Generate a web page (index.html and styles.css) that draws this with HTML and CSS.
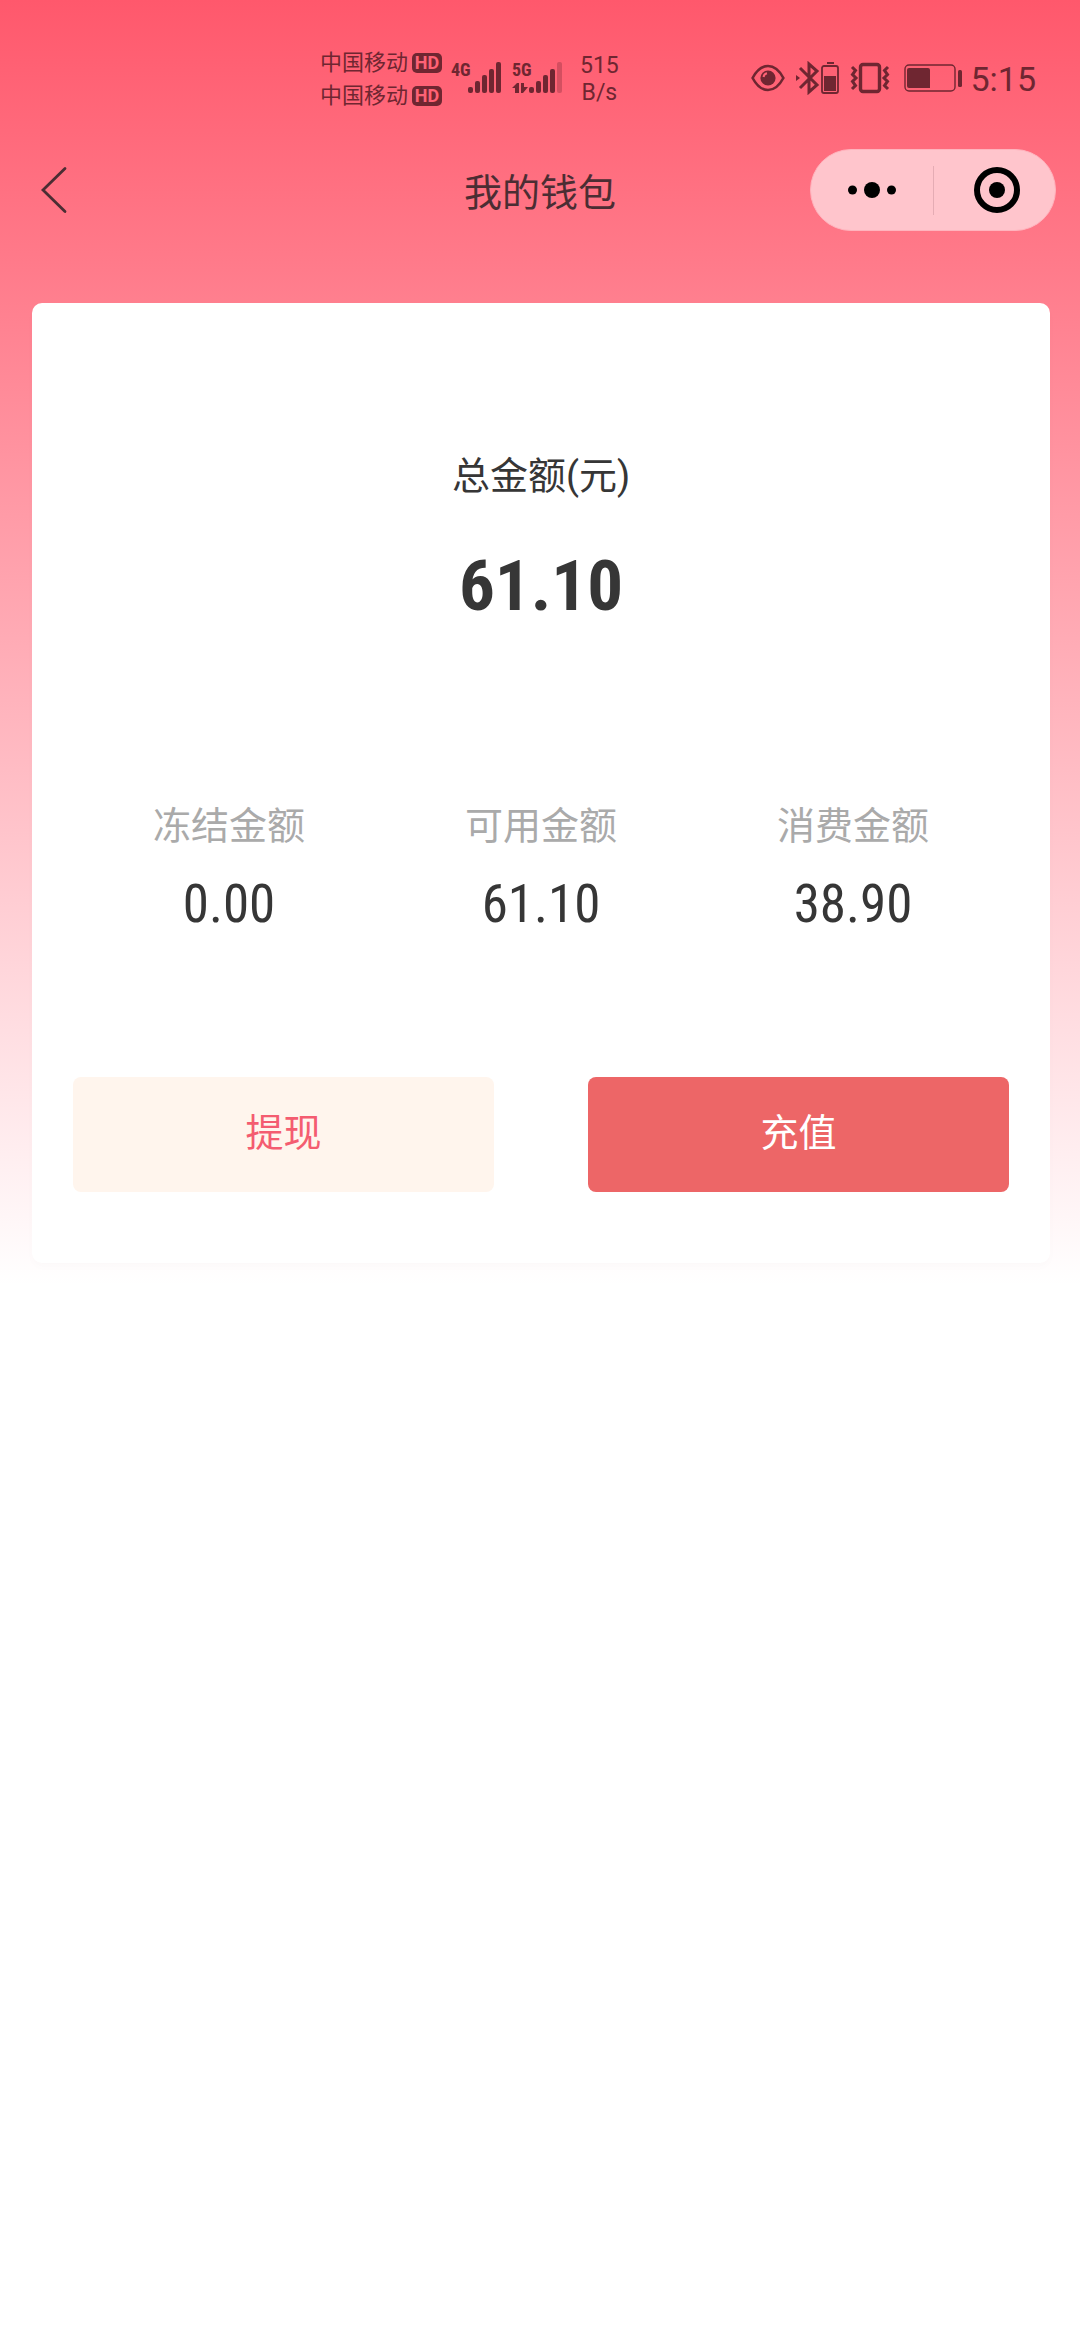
FILE: index.html
```html
<!DOCTYPE html>
<html lang="zh-CN">
<head>
<meta charset="utf-8">
<meta name="viewport" content="width=device-width, initial-scale=1">
<title>我的钱包</title>
<link rel="stylesheet" href="styles.css">
</head>
<body>
<div class="page">
  <div class="status-bar">
    <div class="status-group">
      <div class="carriers">
        <div class="carrier">中国移动<span class="hd">HD</span></div>
        <div class="carrier">中国移动<span class="hd">HD</span></div>
      </div>
      <svg class="signal" width="52" height="44" viewBox="0 -4 52 44" fill="currentColor" aria-label="4G">
        <text class="net" x="0" y="16">4G</text>
        <rect x="17" y="27" width="5" height="6" rx="2"/>
        <rect x="24" y="21" width="5" height="12" rx="2"/>
        <rect x="31" y="15" width="5" height="18" rx="2"/>
        <rect x="38" y="9" width="5" height="24" rx="2"/>
        <rect x="45" y="2" width="5" height="31" rx="2"/>
      </svg>
      <svg class="signal" width="52" height="44" viewBox="0 -4 52 44" fill="currentColor" aria-label="5G">
        <text class="net" x="0" y="16">5G</text>
        <path d="M0 28 5 23H7V33H3V28ZM9 23H12V27H16L11 33H9Z"/>
        <rect x="17" y="27" width="5" height="6" rx="2"/>
        <rect x="24" y="21" width="5" height="12" rx="2"/>
        <rect x="31" y="15" width="5" height="18" rx="2"/>
        <rect x="38" y="9" width="5" height="24" rx="2"/>
        <rect x="45" y="2" width="5" height="31" rx="2" opacity=".3"/>
      </svg>
      <div class="speed">515<br>B/s</div>
    </div>
    <div class="status-group status-icons">
      <svg width="34" height="34" viewBox="0 0 34 34" fill="none" stroke="currentColor" stroke-width="2.6">
        <path d="M1.6 17Q8 5 17 5T32.400 17Q26 29 17 29T1.600 17Z"/>
        <circle cx="17" cy="17" r="7.600" fill="currentColor" stroke="none"/>
        <path d="M12.500 16Q13 13 16 12.300" stroke="#ff6275" stroke-width="2"/>
      </svg>
      <svg class="bluetooth" width="44" height="34" viewBox="0 0 44 34" fill="none" stroke="currentColor">
        <path d="M4 7 21 24 13 31V3L21 10 4 27" stroke-width="3"/>
        <path d="M0 14 4 17 0 20Z" fill="currentColor" stroke="none"/>
        <rect x="26" y="5" width="16" height="27" rx="2" stroke-width="1.800"/>
        <path d="M28 15H40V30H28ZM31 1H38V3H31Z" fill="currentColor" stroke="none"/>
      </svg>
      <svg class="vibrate" width="40" height="34" viewBox="0 0 40 34" fill="none" stroke="currentColor">
        <rect x="10.500" y="3.500" width="19" height="27" rx="2.500" stroke-width="3.400"/>
        <path d="M2 6 5.500 9.500 2.500 13.500 6 17 2.500 20.500 5.500 24.500 2 28M38 6 34.500 9.500 37.500 13.500 34 17 37.500 20.500 34.500 24.500 38 28" stroke-width="3"/>
      </svg>
      <svg class="battery" width="58" height="34" viewBox="0 0 58 34" fill="none" stroke="currentColor">
        <rect x="1" y="4" width="50" height="26" rx="4" stroke-width="1.400"/>
        <path d="M5 7H24Q26 7 26 9V27H5Q3 27 3 25V9Q3 7 5 7Z" fill="currentColor" stroke="none"/>
        <rect x="54" y="9" width="4" height="17" rx="1.500" fill="currentColor" stroke="none"/>
      </svg>
      <time class="clock">5:15</time>
    </div>
  </div>

  <header class="nav">
    <button class="back" type="button" aria-label="返回">
      <svg width="28" height="48" viewBox="0 0 28 48" fill="none" stroke="currentColor" stroke-width="2.800" stroke-linecap="round"><path d="M25 2.500 3 24 25 45.500"/></svg>
    </button>
    <h1 class="title">我的钱包</h1>
    <div class="capsule">
      <button class="capsule-button" type="button" aria-label="更多">
        <svg width="50" height="18" viewBox="0 0 50 18"><circle cx="5.500" cy="9" r="4.500"/><circle cx="25" cy="9" r="8"/><circle cx="44.500" cy="9" r="4.500"/></svg>
      </button>
      <button class="capsule-button" type="button" aria-label="关闭">
        <svg width="46" height="46" viewBox="0 0 46 46"><circle cx="23" cy="23" r="20" fill="none" stroke="#000" stroke-width="6"/><circle cx="23" cy="23" r="8"/></svg>
      </button>
    </div>
  </header>

  <main class="card">
    <p class="label">总金额(元)</p>
    <p class="total">61.10</p>
    <dl class="breakdown">
      <div><dt>冻结金额</dt><dd>0.00</dd></div>
      <div><dt>可用金额</dt><dd>61.10</dd></div>
      <div><dt>消费金额</dt><dd>38.90</dd></div>
    </dl>
    <div class="actions">
      <button class="action withdraw" type="button">提现</button>
      <button class="action recharge" type="button">充值</button>
    </div>
  </main>
</div>
</body>
</html>
```
FILE: styles.css
```css
* {
  box-sizing: border-box;
}

body {
  margin: 0;
  background: #fff;
  color: #363636;
  font-family: Roboto, "Noto Sans CJK SC", sans-serif;
}

h1, p, dl, dd {
  margin: 0;
}

button {
  border: 0;
  padding: 0;
  background: none;
  color: inherit;
  font: inherit;
}

svg {
  display: block;
  flex: none;
}

.page {
  min-height: 100vh;
  background: linear-gradient(#ff586c, #fff 1285px);
}

/* Status bar */
.status-bar {
  display: flex;
  justify-content: space-between;
  height: 140px;
  padding: 18px 44px 0 320px;
  color: #6f2631;
}

.status-group {
  display: flex;
  align-items: center;
  height: 120px;
}

.carriers,
.speed {
  padding-top: 2px;
}

.carrier {
  display: flex;
  align-items: center;
  gap: 4px;
  font-size: 22px;
  line-height: 33px;
}

.hd {
  width: 30px;
  border-radius: 5px;
  background: #6f2631;
  color: #ff6275;
  font-size: 18px;
  font-weight: 700;
  line-height: 20px;
  text-align: center;
}

.signal {
  margin-left: 9px;
}

.net {
  font: 700 18px "Roboto Condensed", "Noto Sans CJK SC", sans-serif;
}

.speed {
  margin-left: 16px;
  font-size: 23px;
  line-height: 27px;
  text-align: center;
}

.bluetooth {
  margin-left: 11px;
}

.vibrate {
  margin-left: 10px;
}

.battery {
  margin-left: 14px;
}

.clock {
  margin-left: 8px;
  padding-top: 2px;
  font-size: 34px;
}

/* Navigation */
.nav {
  display: grid;
  grid-template-columns: 1fr auto 1fr;
  align-items: center;
  height: 100px;
  padding: 0 24px;
  color: #4b2d33;
}

.back {
  justify-self: start;
  margin-left: 16px;
}

.title {
  padding-top: 6px;
  font-size: 38px;
  font-weight: 400;
  line-height: 54px;
}

.capsule {
  display: flex;
  align-items: center;
  justify-self: end;
  width: 246px;
  height: 82px;
  border: 1px solid #ffb3bd;
  border-radius: 41px;
  background: #ffc5cc;
}

.capsule-button {
  display: flex;
  width: 50%;
  align-items: center;
  justify-content: center;
  height: 49px;
}

.capsule-button + .capsule-button {
  padding-left: 4px;
  border-left: 1px solid #e5acb4;
}

/* Wallet card */
.card {
  margin: 63px 30px 0 32px;
  padding: 146px 41px 71px;
  border-radius: 10px;
  background: #fff;
  box-shadow: 0 4px 8px rgba(0, 0, 0, .015);
  text-align: center;
}

.label {
  font-size: 38px;
  line-height: 54px;
}

.total {
  margin-top: 43px;
  font: 700 71px/80px "Roboto Condensed", "Noto Sans CJK SC", sans-serif;
}

.breakdown {
  display: grid;
  grid-template-columns: repeat(3, 1fr);
  margin-top: 173px;
}

.breakdown dt {
  color: #aaa;
  font-size: 38px;
  line-height: 54px;
}

.breakdown dd {
  margin-top: 21px;
  font: 400 53px/60px "Roboto Condensed", "Noto Sans CJK SC", sans-serif;
}

.actions {
  display: grid;
  grid-template-columns: 1fr 1fr;
  gap: 94px;
  margin-top: 143px;
}

.action {
  height: 115px;
  padding-bottom: 10px;
  border-radius: 8px;
  font-size: 38px;
}

.withdraw {
  background: #fff5ed;
  color: #f45c70;
}

.recharge {
  background: #ed6667;
  color: #fff;
}
```
